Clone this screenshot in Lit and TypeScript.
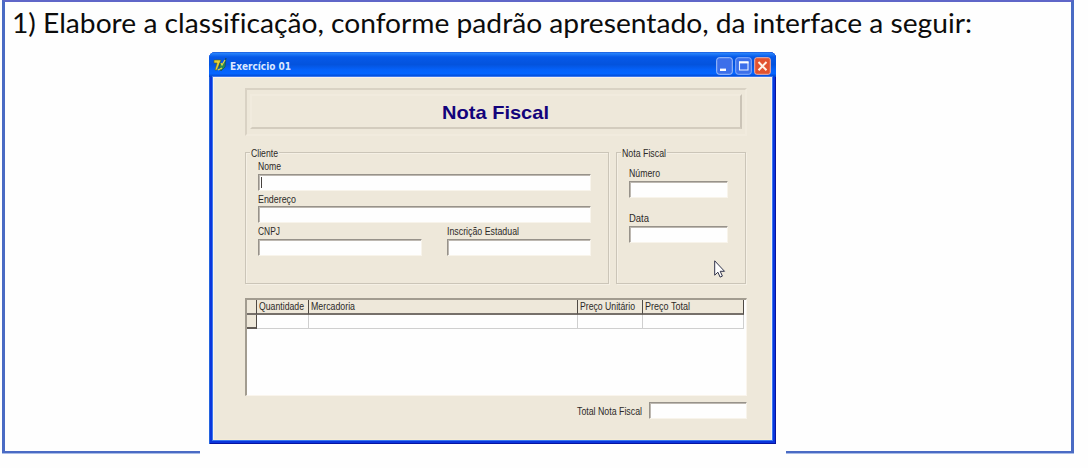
import { LitElement, html, css } from "lit";
import { customElement, property } from "lit/decorators.js";

/* One line of text, set to a fixed measure. */
@customElement("fit-text")
class FitText extends LitElement {
  @property() text = "";
  @property({ type: Number }) width = 0;
  @property({ type: Number }) height = 12;
  @property({ type: Number }) baseline = 10;
  static styles = css`
    :host { display: block; flex: none; }
    svg { display: block; overflow: visible; }
    text { fill: currentColor; white-space: pre; }
  `;
  render() {
    return html`<svg width=${this.width} height=${this.height}>
      <text x="0" y=${this.baseline} textLength=${this.width} lengthAdjust="spacingAndGlyphs">${this.text}</text>
    </svg>`;
  }
}

const label = (text: string, width: number, height = 12, baseline = 10) =>
  html`<fit-text class="label" .text=${text} .width=${width} .height=${height} .baseline=${baseline}></fit-text>`;

@customElement("app-root")
class AppRoot extends LitElement {
  static styles = css`
    :host { display: block; width: 1088px; height: 468px; background: #fefefe; overflow: hidden; }
    * { box-sizing: border-box; }
    .slide { width: 1072px; height: 454px; margin-left: 2px; display: flex; flex-direction: column; }
    .body { flex: 1; min-height: 0; border: solid #4a6bc4; border-width: 2px 3px 0; border-top-color: #5f66c8; padding: 0 0 0 7px; }
    .foot { height: 3px; display: flex; justify-content: space-between; }
    .foot i { height: 3px; background: #4a6bc4; border-bottom: 1px solid #a9bce8; }
    .foot .l { width: 198px; }
    .foot .r { width: 288px; }
    .heading { font: 27px Lato, "Open Sans", sans-serif; font-variant-ligatures: none; color: #0c0c0c; height: 50px; }
    .window { width: 567px; height: 392px; margin-left: 197px; display: flex; flex-direction: column;
      border-radius: 6px 6px 0 0; background: #0a35dc; padding: 0 4px 4px;
      box-shadow: inset 1px 0 #2563df, inset -1px 0 #0714a0, inset 0 -1px #0714a0; }
    .bar { height: 25px; margin: 0 -4px; padding: 0 5px 0 4px; display: flex; align-items: center; border-radius: 6px 6px 0 0;
      background: linear-gradient(#1d5ddb 0, #2580fa 6%, #0659e8 20%, #0453dd 50%, #0562fa 72%, #0565ff 86%, #0444c9 100%); }
    .bar .name { color: #dce8ff; font: bold 11px "DejaVu Sans", sans-serif; margin-left: 3px; flex: 1; }
    .bar svg { flex: none; }
    .buttons { display: flex; gap: 2px; padding-top: 2px; }
    .client { flex: 1; min-height: 0; background: #eee8da; display: flex; flex-direction: column;
      border: 1px solid #f8f1ee; border-bottom-color: #f5ecd6; outline: 1px solid #3b78ee; outline-offset: 0;
      padding: 10px 24px 0 31px; }
    .banner { width: 502px; height: 48px; border: 2px solid; border-color: #d9d2c4 #f1ebde #f1ebde #d9d2c4; padding: 4px 3px 4px 3px; }
    .plate { height: 35px; width: 492px; border: 2px solid; border-color: #f1ebde #cbc4b7 #d3ccbe #f1ebde; padding-left: 190px; }
    .plate .title { font: bold 19px "Liberation Sans", Arial, sans-serif; color: #13037b; }
    .label { font: 10px "Liberation Sans", Arial, sans-serif; color: #2d2a28; }
    .groups { display: flex; gap: 7px; margin-top: 16px; }
    .group { height: 132px; border: 1px solid #cbc5b8; box-shadow: inset 1px 1px #f5f0e5, 1px 1px #f5f0e5; display: flex; flex-direction: column; }
    .legend { height: 6px; width: max-content; background: #eee8da; margin: -1px 0 0 4px; padding: 0 1px; }
    .cli { width: 364px; }
    .nf { width: 130px; }
    .fields { padding-left: 12px; }
    .input { height: 17px; background: #fefefe; border: 1px solid; border-color: #97928a #f8f4eb #f8f4eb #97928a;
      box-shadow: inset 1px 1px #bdb8b1; }
    .caret { display: block; width: 1px; height: 11px; background: #46423e; margin: 2px 0 0 2px; }
    .pair { display: flex; gap: 25px; }
    .grid { margin-top: 14px; width: 502px; height: 98px; background: #fefefe; border: solid; border-width: 2px 1px 1px 2px;
      border-color: #a29c90 #faf5ed #faf5ed #a29c90; }
    .row { display: grid; grid-template-columns: 10px 52px 269px 65px 101px; width: 497px; }
    .head > div { height: 15px; background: #eee8da; border-right: 1px solid #4f4a45; border-bottom: 2px solid #76706a; padding-left: 2px; }
    .data > div { height: 14px; border-right: 1px solid #cfcfcf; border-bottom: 1px solid #cfcfcf; }
    .data > div:first-child { background: #eee8da; border-right: 1px solid #4f4a45; border-bottom: 2px solid #615b56; }
    .total { display: flex; gap: 7px; margin-top: 6px; justify-content: flex-end; width: 502px; }
    .cursor { position: absolute; left: 714px; top: 260px; }
  `;

  render() {
    return html`
      <div class="slide">
        <div class="body">
          <fit-text class="heading" .text=${"1) Elabore a classificação, conforme padrão apresentado, da interface a seguir:"}
            .width=${960} .height=${50} .baseline=${31}></fit-text>
          <div class="window">
            <div class="bar">
              <svg width="14" height="16" viewBox="0 0 14 16">
                <path d="M1 3h7L4 13H2l2-7H1z" fill="#e5cf35" stroke="#55641f" stroke-width=".6"/>
                <path d="M7 6l3 1 3-6-1 9-4 4-2-3z" fill="#278b52" stroke="#173e54" stroke-width=".6"/>
                <path d="M8 6l1 2 3-5M5 13l4-2" fill="none" stroke="#e5dc45" stroke-width="1.2"/>
              </svg>
              <fit-text class="name" .text=${"Exercício 01"} .width=${61} .height=${16} .baseline=${12.5}></fit-text>
              <div class="buttons">
                <svg width="17" height="18" viewBox="0 0 17 18">
                  <rect x=".7" y=".7" width="15.6" height="16.6" rx="2.5" fill="#3c6fea" stroke="#a9c4fb"/>
                  <path d="M4 12.8h6" stroke="#fff" stroke-width="2.4"/>
                </svg>
                <svg width="17" height="18" viewBox="0 0 17 18">
                  <rect x=".7" y=".7" width="15.6" height="16.6" rx="2.5" fill="#3c6fea" stroke="#8db0fa"/>
                  <path d="M4.5 5h8.5v8h-8.5z" fill="none" stroke="#e6efff" stroke-width="1.1"/>
                  <path d="M4 5.4h9.5" stroke="#fff" stroke-width="2"/>
                </svg>
                <svg width="17" height="18" viewBox="0 0 17 18">
                  <rect x=".7" y=".7" width="15.6" height="16.6" rx="2" fill="#e2532f" stroke="#f3b5a8"/>
                  <path d="M4.5 5l8 8.3M12.5 5l-8 8.3" stroke="#fff4e8" stroke-width="2"/>
                </svg>
              </div>
            </div>
            <div class="client">
              <div class="banner"><div class="plate">
                <fit-text class="title" .text=${"Nota Fiscal"} .width=${107} .height=${30} .baseline=${23}></fit-text>
              </div></div>
              <div class="groups">
                <div class="group cli">
                  <div class="legend">${label("Cliente", 27, 6, 5)}</div>
                  <div class="fields">
                    ${label("Nome", 23, 16, 12)}
                    <div class="input" style="width:333px"><i class="caret"></i></div>
                    ${label("Endereço", 38, 15, 12)}
                    <div class="input" style="width:333px"></div>
                    <div class="pair">
                      <div>${label("CNPJ", 22, 16, 12)}<div class="input" style="width:164px"></div></div>
                      <div>${label("Inscrição Estadual", 72, 16, 12)}<div class="input" style="width:144px"></div></div>
                    </div>
                  </div>
                </div>
                <div class="group nf">
                  <div class="legend">${label("Nota Fiscal", 44, 6, 5)}</div>
                  <div class="fields">
                    ${label("Número", 31, 23, 19)}
                    <div class="input" style="width:99px"></div>
                    ${label("Data", 20, 28, 24)}
                    <div class="input" style="width:99px"></div>
                  </div>
                </div>
              </div>
              <div class="grid">
                <div class="row head">
                  <div></div>
                  <div>${label("Quantidade", 45, 13, 10)}</div>
                  <div>${label("Mercadoria", 44, 13, 10)}</div>
                  <div>${label("Preço Unitário", 55, 13, 10)}</div>
                  <div>${label("Preço Total", 45, 13, 10)}</div>
                </div>
                <div class="row data"><div></div><div></div><div></div><div></div><div></div></div>
              </div>
              <div class="total">
                ${label("Total Nota Fiscal", 65, 16, 13)}
                <div class="input" style="width:98px"></div>
              </div>
            </div>
          </div>
        </div>
        <div class="foot"><i class="l"></i><i class="r"></i></div>
      </div>
      <svg class="cursor" width="12" height="19" viewBox="0 0 12 19">
        <path d="M.7.8v14.4l3.2-3 2.2 4.9 2.3-1-2.2-4.8h4.3z" fill="#fff" stroke="#30334a" stroke-width="1"/>
      </svg>`;
  }
}
